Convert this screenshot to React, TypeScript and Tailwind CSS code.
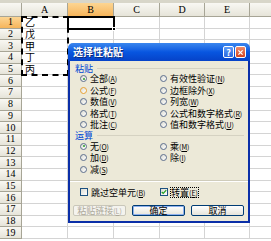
import React from 'react';

const cols = [
  { label: 'A', w: 'w-[46px]', selected: false },
  { label: 'B', w: 'w-[46px]', selected: true },
  { label: 'C', w: 'w-[46px]', selected: false },
  { label: 'D', w: 'w-[45px]', selected: false },
  { label: 'E', w: 'w-[45px]', selected: false },
  { label: '', w: 'w-[30px]', selected: false },
];

const cellsA = ['乙', '戊', '甲', '丁', '丙'];
const rowCount = 19;

const pasteLeft = [
  { text: '全部', key: 'A', checked: true },
  { text: '公式', key: 'F', hover: true },
  { text: '数值', key: 'V' },
  { text: '格式', key: 'T' },
  { text: '批注', key: 'C' },
];
const pasteRight = [
  { text: '有效性验证', key: 'N' },
  { text: '边框除外', key: 'X' },
  { text: '列宽', key: 'W' },
  { text: '公式和数字格式', key: 'R' },
  { text: '值和数字格式', key: 'U' },
];
const opLeft = [
  { text: '无', key: 'O', checked: true },
  { text: '加', key: 'D' },
  { text: '减', key: 'S' },
];
const opRight = [
  { text: '乘', key: 'M' },
  { text: '除', key: 'I' },
];

type Opt = { text: string; key: string; checked?: boolean; hover?: boolean };

const Radio: React.FC<{ checked?: boolean; hover?: boolean }> = ({ checked, hover }) => (
  <span
    className={`relative inline-block h-[7px] w-[7px] shrink-0 rounded-full border bg-gradient-to-br from-[#dcdcd3] to-white ${
      hover ? 'border-[#e5a23a] bg-[#f7d98a]' : 'border-[#5d6f8e]'
    }`}
  >
    {checked && <span className="absolute left-[1.5px] top-[1.5px] h-[2px] w-[2px] rounded-full bg-[#2a9d2a]" />}
  </span>
);

const Label: React.FC<{ text: string; k: string; focus?: boolean }> = ({ text, k, focus }) => (
  <span className={`whitespace-nowrap leading-none ${focus ? 'outline outline-1 outline-dotted outline-black' : ''}`}>
    {text}
    <span className="text-[7px]">
      (<u>{k}</u>)
    </span>
  </span>
);

const RadioRow: React.FC<{ opt: Opt }> = ({ opt }) => (
  <div className="flex h-[11.5px] items-center gap-[3px]">
    <Radio checked={opt.checked} hover={opt.hover} />
    <Label text={opt.text} k={opt.key} />
  </div>
);

const GroupLabel: React.FC<{ text: string }> = ({ text }) => (
  <div className="flex h-[10px] items-center gap-1 pl-[5px] pr-[4px]">
    <span className="leading-none text-[#0046d5]">{text}</span>
    <span className="h-px flex-1 bg-[#d5d2c2]" />
  </div>
);

const Checkbox: React.FC<{ checked?: boolean }> = ({ checked }) => (
  <span className="relative inline-flex h-[8px] w-[8px] shrink-0 items-center justify-center border border-[#1c5180] bg-gradient-to-br from-[#dcdcd3] to-white">
    {checked && (
      <svg viewBox="0 0 8 8" className="h-[6px] w-[6px]">
        <path d="M1 4 L3 6 L7 1.5" fill="none" stroke="#21a121" strokeWidth="1.6" />
      </svg>
    )}
  </span>
);

const Dialog: React.FC = () => (
  <div
    className="absolute left-[68px] top-[43px] flex h-[180px] w-[182px] flex-col text-[9px] text-black"
    style={{ fontFamily: '"Noto Sans CJK SC", "Noto Sans", sans-serif' }}
  >
    {/* Title bar */}
    <div className="flex h-[18px] items-center rounded-t-[5px] bg-gradient-to-b from-[#3a86ee] via-[#0856e0] to-[#0642c8] pl-[5px] pr-[4px]">
      <span className="flex-1 text-[10px] font-bold leading-none text-white [text-shadow:1px_1px_0_#0a2a7a]">
        选择性粘贴
      </span>
      <div className="flex items-center gap-[1px]">
        <span className="flex h-[12px] w-[11px] items-center justify-center rounded-[2px] border border-white bg-gradient-to-b from-[#5f9bf7] to-[#2a66e0] text-[9px] font-bold leading-none text-white">
          ?
        </span>
        <span className="flex h-[12px] w-[11px] items-center justify-center rounded-[2px] border border-white bg-gradient-to-b from-[#ec8a6a] to-[#d6411c]">
          <svg viewBox="0 0 10 10" className="h-[7px] w-[7px]">
            <path d="M2 2 L8 8 M8 2 L2 8" stroke="white" strokeWidth="1.8" />
          </svg>
        </span>
      </div>
    </div>

    {/* Body */}
    <div className="flex flex-1 flex-col border-x-2 border-b-2 border-[#0b2fa8] bg-[#ece9d8]">
      <div className="mt-[2px]">
        <GroupLabel text="粘贴" />
      </div>
      <div className="flex pl-[10px]">
        <div className="flex w-[80px] flex-col">
          {pasteLeft.map((o) => (
            <RadioRow key={o.key} opt={o} />
          ))}
        </div>
        <div className="flex flex-col">
          {pasteRight.map((o) => (
            <RadioRow key={o.key} opt={o} />
          ))}
        </div>
      </div>
      <GroupLabel text="运算" />
      <div className="flex pl-[10px]">
        <div className="flex w-[80px] flex-col">
          {opLeft.map((o) => (
            <RadioRow key={o.key} opt={o} />
          ))}
        </div>
        <div className="flex flex-col">
          {opRight.map((o) => (
            <RadioRow key={o.key} opt={o} />
          ))}
        </div>
      </div>
      <div className="mt-[5px] border-t border-b border-t-[#cfccbb] border-b-white" />
      <div className="mt-[5px] flex h-[10px] items-center pl-[10px]">
        <div className="flex w-[80px] items-center gap-[3px]">
          <Checkbox />
          <Label text="跳过空单元" k="B" />
        </div>
        <div className="flex items-center gap-[3px]">
          <Checkbox checked />
          <Label text="转置" k="E" focus />
        </div>
      </div>
      <div className="mt-[8px] flex gap-[6px] pl-[3px]">
        <span className="flex h-[11px] w-[53px] items-center justify-center rounded-[2px] border border-[#c9c7ba] bg-[#f4f3ee] leading-none text-[#aca899]">
          <Label text="粘贴链接" k="L" />
        </span>
        <span className="flex h-[11px] w-[53px] items-center justify-center rounded-[2px] border border-[#003c74] bg-gradient-to-b from-white to-[#e6e4da] leading-none shadow-[inset_0_0_0_1px_#8fb1ee]">
          确定
        </span>
        <span className="flex h-[11px] w-[53px] items-center justify-center rounded-[2px] border border-[#003c74] bg-gradient-to-b from-white to-[#e6e4da] leading-none">
          取消
        </span>
      </div>
    </div>
  </div>
);

export default function App() {
  const rows = Array.from({ length: rowCount }, (_, i) => i + 1);
  return (
    <div
      className="relative h-[241px] w-[271px] overflow-hidden bg-white"
      style={{ fontFamily: '"Liberation Serif", "Noto Sans CJK SC", serif' }}
    >
      <div className="h-[3px] bg-[#d8d6c9]" />
      {/* Column headers */}
      <div className="flex h-[14px]">
        <div className="w-[22px] shrink-0 border-r border-b border-[#a7a596] bg-gradient-to-b from-[#f9f8f3] to-[#e6e4d9]" />
        {cols.map((c, i) => (
          <div
            key={i}
            className={`${c.w} flex shrink-0 items-center justify-center border-r border-b border-[#a7a596] text-[10px] leading-none ${
              c.selected ? 'bg-gradient-to-b from-[#fcd592] to-[#f6b55a]' : 'bg-gradient-to-b from-[#f9f8f3] to-[#e6e4d9]'
            }`}
          >
            {c.label}
          </div>
        ))}
      </div>

      {/* Rows */}
      <div className="relative">
        {rows.map((r) => (
          <div key={r} className="flex h-[11.7px]">
            <div
              className={`flex w-[22px] shrink-0 items-center justify-center border-r border-b border-[#a7a596] text-[10px] leading-none ${
                r === 1 ? 'bg-gradient-to-b from-[#fcd592] to-[#f6b55a]' : 'bg-gradient-to-b from-[#f9f8f3] to-[#e6e4d9]'
              }`}
            >
              {r}
            </div>
            {cols.map((c, i) => (
              <div
                key={i}
                className={`${c.w} flex shrink-0 items-center border-r border-b border-[#d4d4d4] pl-[3px] text-[10px] leading-none`}
                style={i === 0 ? { fontFamily: '"Noto Sans CJK SC", sans-serif' } : undefined}
              >
                {i === 0 && r <= 5 ? cellsA[r - 1] : ''}
              </div>
            ))}
          </div>
        ))}

        {/* Copy marquee around A1:A5 */}
        <div className="absolute left-[21px] top-[-1px] h-[60px] w-[48px] border-2 border-dashed border-black" />
        {/* Active cell B1 */}
        <div className="absolute left-[67px] top-[-1px] h-[13.7px] w-[48px] border-2 border-black" />
        <div className="absolute left-[112px] top-[10px] h-[4px] w-[4px] border border-white bg-black" />
      </div>

      <Dialog />
    </div>
  );
}
